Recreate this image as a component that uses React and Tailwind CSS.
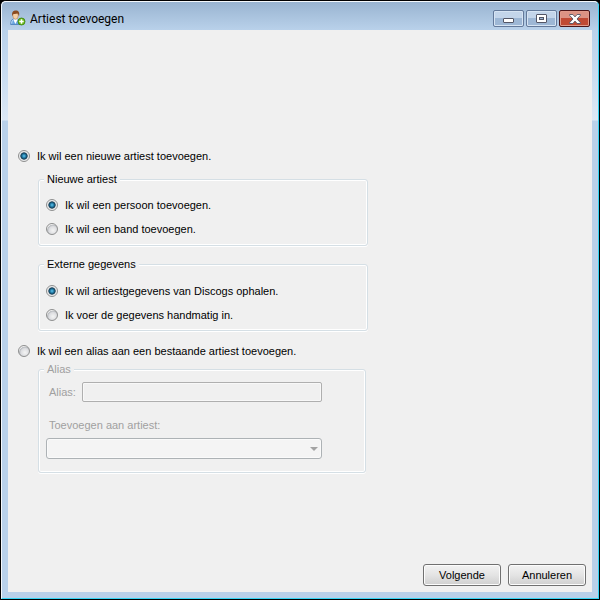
const radioBase =
  "m-0 size-3 shrink-0 appearance-none rounded-full border border-[#8e8f8f] bg-[radial-gradient(circle_at_60%_65%,#f4f4f4_0,#dcdde0_45%,#b9bcc0_62%,#f2f2f2_70%)] checked:bg-[radial-gradient(circle_at_center,#6cc8ea_0,#3398c6_16%,#175a7c_36%,#16384f_46%,#dfe2e4_56%,#f4f4f4_72%)]";

function Radio({ id, name, label, defaultChecked }) {
  return (
    <div className="flex h-3 items-center gap-[7px]">
      <input id={id} type="radio" name={name} defaultChecked={defaultChecked} className={radioBase} />
      <label htmlFor={id} className="whitespace-nowrap">{label}</label>
    </div>
  );
}

function Group({ title, disabled, className, children }) {
  return (
    <fieldset
      disabled={disabled}
      className={"ml-5 rounded-[3px] border border-[#d5dfe5] shadow-[inset_0_0_0_1px_#ffffff,0_1px_0_#ffffff] " + className}
    >
      <legend className="ml-[5px] bg-[#f0f0f0] px-[3px]">{title}</legend>
      {children}
    </fieldset>
  );
}

function PersonIcon() {
  return (
    <svg viewBox="0 0 16 16" className="size-4" aria-hidden="true">
      <path d="M.7 14.500c0-3.500.8-5.200 3.100-5.500h2.800c2.500.3 3.500 2 3.500 5.500z" fill="#6aa5e0" stroke="#3f74b4" strokeWidth=".7" />
      <path d="M3.200 9.200 5.400 14l2.400-4.800z" fill="#fff" />
      <path d="M1.700 13.500c.1-2 .5-3 1.300-3.500" stroke="#cfe4fa" fill="none" />
      <ellipse cx="5.500" cy="5.500" rx="2.700" ry="3.700" fill="#f5cfa6" stroke="#b27a48" strokeWidth=".5" />
      <path d="M2.300 6.200C1.600 2.500 2.800.4 5.700.4s4.200 1.900 3.300 5.800C8.300 4.500 7.900 3.800 7.500 3.600 5.800 4.300 3.600 4 3.100 4.300z" fill="#8b4b20" />
      <circle cx="11.500" cy="11.500" r="3.500" fill="#6fbf1c" stroke="#387f0b" strokeWidth=".8" />
      <path d="M11.500 9.300v4.400M9.300 11.500h4.400" stroke="#fff" strokeWidth="1.500" />
    </svg>
  );
}

const caption =
  "flex h-[17px] w-[31px] items-center justify-center rounded-[2px] border border-[#63799a] bg-linear-to-b from-[#c3d5ea] from-50% to-[#9db7d5] to-50% shadow-[inset_0_0_0_1px_#d6e4f3]";

export default function App() {
  return (
    <div className="min-h-screen bg-black font-['Liberation_Sans',Arial,sans-serif] text-[11px] leading-[14px] text-black">
      <div className="flex min-h-screen flex-col rounded-t-[6px] border border-black bg-[#b9d1ea]">
        <div className="flex flex-1 flex-col rounded-t-[5px] border border-r-[#35d5f5] border-b-[#35d5f5] border-t-[#f4f8fc] border-l-[#f4f8fc] bg-[linear-gradient(to_bottom,#99b4d1_0,#b9d1ea_28px,#c4d9ef_60px,#dce8f5_118px,#b9d1ea_119px)] px-[6px] pb-[6px]">
          <header className="flex h-7 items-center">
            <div className="flex flex-1 items-center gap-1 pl-[2px] pt-1">
              <PersonIcon />
              <h1 className="pt-[2px] font-[Roboto,sans-serif] text-[12px] leading-4">Artiest toevoegen</h1>
            </div>
            <div className="flex gap-[2px] pr-[2px] pt-[5px]">
              <button type="button" aria-label="Minimaliseren" className={caption}>
                <svg viewBox="0 0 11 5" className="mt-1 h-[5px] w-[11px]" aria-hidden="true">
                  <rect x=".5" y=".5" width="10" height="4" rx=".5" fill="#fff" stroke="#535666" />
                </svg>
              </button>
              <button type="button" aria-label="Maximaliseren" className={caption}>
                <svg viewBox="0 0 11 9" className="h-[9px] w-[11px]" aria-hidden="true">
                  <rect x=".5" y=".5" width="10" height="8" rx=".5" fill="#fff" stroke="#535666" />
                  <rect x="3.500" y="3.500" width="4" height="2" fill="#9db7d5" stroke="#535666" />
                </svg>
              </button>
              <button
                type="button"
                aria-label="Sluiten"
                className="flex h-[17px] w-[31px] items-center justify-center rounded-[2px] border border-[#4c1518] bg-linear-to-b from-[#dc9384] from-45% to-[#c04a34] to-50% shadow-[inset_0_0_0_1px_#e09a8a]"
              >
                <svg viewBox="0 0 12 10" className="h-[10px] w-3" aria-hidden="true">
                  <path d="M.7.500h3.200L6 2.900 8.100.500h3.200v1L8 5l3.300 3.500v1H8.100L6 7.100 3.900 9.500H.7v-1L4 5 .7 1.500z" fill="#fff" stroke="#535666" strokeWidth=".9" />
                </svg>
              </button>
            </div>
          </header>

          <main className="flex flex-1 flex-col bg-[#f0f0f0] px-[10px] pt-[120px]">
            <Radio id="new-artist" name="mode" label="Ik wil een nieuwe artiest toevoegen." defaultChecked />
            <Group title="Nieuwe artiest" className="mt-[10px] h-[74px] w-[330px]">
              <div className="flex flex-col gap-3 pl-[7px] pt-[13px]">
                <Radio id="person" name="kind" label="Ik wil een persoon toevoegen." defaultChecked />
                <Radio id="band" name="kind" label="Ik wil een band toevoegen." />
              </div>
            </Group>
            <Group title="Externe gegevens" className="mt-[11px] h-[74px] w-[330px]">
              <div className="flex flex-col gap-3 pl-[7px] pt-[14px]">
                <Radio id="discogs" name="source" label="Ik wil artiestgegevens van Discogs ophalen." defaultChecked />
                <Radio id="manual" name="source" label="Ik voer de gegevens handmatig in." />
              </div>
            </Group>
            <div className="mt-[14px]">
              <Radio id="new-alias" name="mode" label="Ik wil een alias aan een bestaande artiest toevoegen." />
            </div>
            <Group title="Alias" disabled className="mt-[5px] h-[111px] w-[328px] text-[#a0a0a0]">
              <div className="flex w-[283px] flex-col pl-[7px] pt-[6px]">
                <div className="flex items-center pl-[3px]">
                  <label htmlFor="alias" className="w-[33px]">Alias:</label>
                  <input id="alias" type="text" className="h-5 min-w-0 flex-1 rounded-[2px] border border-[#afafaf] bg-[#f0f0f0] px-1 shadow-[inset_0_0_0_1px_#f8f8f8]" />
                </div>
                <label htmlFor="target" className="mt-4 pl-[3px]">Toevoegen aan artiest:</label>
                <div className="relative mt-[6px]">
                  <select id="target" className="block h-[21px] w-full appearance-none rounded-[3px] border border-[#adb2b5] bg-[#f4f4f4] px-1 shadow-[inset_0_0_0_1px_#fafafa]">
                    <option></option>
                  </select>
                  <svg viewBox="0 0 8 4" className="pointer-events-none absolute right-1 top-[9px] h-1 w-2" aria-hidden="true">
                    <path d="M0 0h8L4 4z" fill="#a3a3a3" />
                  </svg>
                </div>
              </div>
            </Group>
            <footer className="-mr-1 mt-auto flex justify-end gap-[7px] pb-[6px]">
              {["Volgende", "Annuleren"].map((text) => (
                <button
                  key={text}
                  type="button"
                  className="h-[22px] w-[78px] rounded-[3px] border border-[#707070] bg-linear-to-b from-[#f2f2f2] via-[#e4e4e4] to-[#cfcfcf] shadow-[inset_0_0_0_1px_#fcfcfc]"
                >
                  {text}
                </button>
              ))}
            </footer>
          </main>
        </div>
      </div>
    </div>
  );
}
